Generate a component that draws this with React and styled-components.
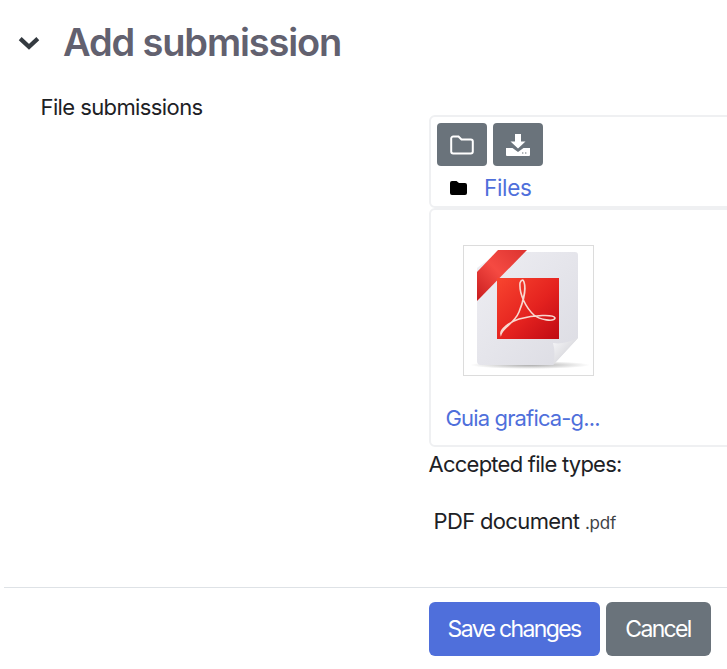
import styled, { createGlobalStyle } from "styled-components";

const GlobalStyle = createGlobalStyle`
html, body {
    margin: 0;
    padding: 0;
    background: #fff;
    overflow: hidden;
}
body {
    font-family: "Inter", "Liberation Sans", sans-serif;
    color: #1d2125;
}
`;

const Page = styled.div`
width: 727px;
height: 669px;
overflow: hidden;
display: flex;
flex-direction: column;
`;

const Header = styled.div`
display: flex;
align-items: center;
height: 42px;
padding: 21px 0 0 18px;
gap: 23px;
`;

const Title = styled.h3`
margin: 0;
font-size: 38px;
line-height: 42px;
font-weight: 600;
letter-spacing: -1.15px;
color: #62616f;
`;

const ChevronIcon = styled.svg`
margin-top: 2px;
`;

const FormRow = styled.div`
display: grid;
grid-template-columns: 388.5px 320px;
padding: 29px 0 0 40.5px;
`;

const Label = styled.div`
font-size: 22px;
line-height: 30px;
letter-spacing: -0.6px;
color: #1d2125;
`;

const Field = styled.div`
padding-top: 23px;
display: flex;
flex-direction: column;
`;

const Panel = styled.div`
border: 2px solid #eff0f2;
border-radius: 6px;
box-sizing: border-box;
`;

const ToolbarPanel = styled(Panel)`
height: 93px;
padding: 6px 0 0 6px;
`;

const Buttons = styled.div`
display: flex;
gap: 6px;
`;

const IconButton = styled.div`
width: 50px;
height: 43px;
border-radius: 4px;
background: #6a737b;
display: flex;
align-items: center;
justify-content: center;
`;

const Path = styled.div`
display: flex;
align-items: center;
height: 44px;
padding-left: 13px;
gap: 17px;
`;

const FileLink = styled.a`
color: #4f6fdb;
font-size: 22.5px;
letter-spacing: -0.35px;
line-height: 30px;
`;

const FilesPanel = styled(Panel)`
height: 239px;
padding: 35px 0 0 14.5px;
`;

const Thumb = styled.div`
width: 131px;
height: 131px;
margin-left: 17.5px;
border: 1px solid #dcdcdc;
box-sizing: border-box;
display: flex;
align-items: center;
justify-content: center;
`;

const FileName = styled(FileLink)`
display: block;
margin-top: 27px;
font-size: 22px;
letter-spacing: -0.85px;
`;

const Accepted = styled.div`
font-size: 22px;
line-height: 30px;
letter-spacing: -0.75px;
margin: 1.5px 0 0 -0.5px;
`;

const TypeRow = styled.div`
font-size: 22px;
line-height: 30px;
letter-spacing: -0.65px;
margin-top: 27.5px;
padding-left: 4.5px;
`;

const Ext = styled.small`
font-size: 17px;
letter-spacing: -0.2px;
color: #3f4347;
`;

const Divider = styled.hr`
margin: 49px 0 0 4px;
border: 0;
border-top: 1px solid #dee2e6;
`;

const Actions = styled.div`
display: flex;
gap: 6px;
padding: 14px 0 0 429px;
`;

const Button = styled.button`
height: 54px;
width: ${(p) => p.$width}px;
border: 0;
border-radius: 6px;
background: ${(p) => p.$bg};
color: #fff;
font-family: inherit;
font-size: 23px;
letter-spacing: -1.65px;
padding: 0 1px 0 0;
`;

const Chevron = () => (
    <ChevronIcon width="22" height="14" viewBox="0 0 22 14">
        <path d="M2.2 2.6 L11 10.8 L19.8 2.6" fill="none" stroke="#343a40" strokeWidth="4.2" />
    </ChevronIcon>
);

const FolderOutline = () => (
    <svg width="24" height="20" viewBox="0 0 24 20" fill="none" stroke="#fff" strokeWidth="2">
        <path d="M1.2 3.5 a2 2 0 0 1 2 -2 h5.3 l3 3 h9.3 a2 2 0 0 1 2 2 v10 a2 2 0 0 1 -2 2 h-17.6 a2 2 0 0 1 -2 -2 z" />
    </svg>
);

const DownloadTray = () => (
    <svg width="24" height="22" viewBox="0 0 24 22">
        <path d="M9 0 h6 v7.5 h4.5 L12 14.5 L4.5 7.5 H9 z" fill="#fff" />
        <path d="M0 14 h6.5 L12 18 L17.5 14 H24 v7 a1 1 0 0 1 -1 1 H1 a1 1 0 0 1 -1 -1 z" fill="#fff" />
        <rect x="16" y="18.5" width="1.4" height="1" fill="#6a737b" />
        <rect x="19" y="18.5" width="1.4" height="1" fill="#6a737b" />
    </svg>
);

const FolderSolid = () => (
    <svg width="17" height="14" viewBox="0 0 17 14">
        <path d="M0 2 a2 2 0 0 1 2 -2 h4.5 l2.5 2 h6 a2 2 0 0 1 2 2 v8 a2 2 0 0 1 -2 2 H2 a2 2 0 0 1 -2 -2 z" fill="#000" />
    </svg>
);

const PdfIcon = () => (
    <svg width="129" height="129" viewBox="0 0 129 129">
        <defs>
            <linearGradient id="sheet" x1="0" y1="0" x2="1" y2="1">
                <stop offset="0" stopColor="#eeeef3" />
                <stop offset="1" stopColor="#dcdce3" />
            </linearGradient>
            <linearGradient id="red" x1="0" y1="0" x2="1" y2="1">
                <stop offset="0" stopColor="#f8452f" />
                <stop offset="0.55" stopColor="#e4221f" />
                <stop offset="1" stopColor="#bf0a14" />
            </linearGradient>
            <linearGradient id="ribbon" x1="0" y1="1" x2="1" y2="0">
                <stop offset="0" stopColor="#c81c1e" />
                <stop offset="0.5" stopColor="#f54a42" />
                <stop offset="1" stopColor="#dc3330" />
            </linearGradient>
            <linearGradient id="curl" x1="0" y1="0" x2="1" y2="1">
                <stop offset="0" stopColor="#f8f8fa" />
                <stop offset="1" stopColor="#c6c6cc" />
            </linearGradient>
            <radialGradient id="shade">
                <stop offset="0" stopColor="#8f8f8f" stopOpacity="0.75" />
                <stop offset="1" stopColor="#8f8f8f" stopOpacity="0" />
            </radialGradient>
        </defs>
        <ellipse cx="66" cy="119" rx="60" ry="4" fill="url(#shade)" />
        <path d="M13 22 L35 6 H111 a3 3 0 0 1 3 3 V92 L89 119 H17 a4 4 0 0 1 -4 -4 z" fill="url(#sheet)" />
        <path d="M114 92 Q100 99 89 97 Q92 108 89 119 Z" fill="url(#curl)" />
        <path d="M13 55 V26 L34 4 H63 L16 52 Z" fill="url(#ribbon)" />
        <rect x="33" y="32" width="62" height="61" fill="url(#red)" />
        <path
            d="M37 88 C40 80 50 78 55 66 C60 54 62 42 60 36 C59 33 57 34 56 37 C55 48 62 62 70 69 C76 74 90 76 91 72 C90 68 70 69 55 73 C45 76 36 84 37 88 z"
            fill="none"
            stroke="#f8d8d0"
            strokeWidth="1.6"
        />
    </svg>
);

export default function App() {
    return (
        <Page>
            <GlobalStyle />
            <Header>
                <Chevron />
                <Title>Add submission</Title>
            </Header>
            <FormRow>
                <Label>File submissions</Label>
                <Field>
                    <ToolbarPanel>
                        <Buttons>
                            <IconButton><FolderOutline /></IconButton>
                            <IconButton><DownloadTray /></IconButton>
                        </Buttons>
                        <Path>
                            <FolderSolid />
                            <FileLink>Files</FileLink>
                        </Path>
                    </ToolbarPanel>
                    <FilesPanel>
                        <Thumb><PdfIcon /></Thumb>
                        <FileName>Guia grafica-g...</FileName>
                    </FilesPanel>
                    <Accepted>Accepted file types:</Accepted>
                    <TypeRow>PDF document <Ext>.pdf</Ext></TypeRow>
                </Field>
            </FormRow>
            <Divider />
            <Actions>
                <Button $width={171} $bg="#4f6fdb">Save changes</Button>
                <Button $width={105} $bg="#6a737b">Cancel</Button>
            </Actions>
        </Page>
    );
}
